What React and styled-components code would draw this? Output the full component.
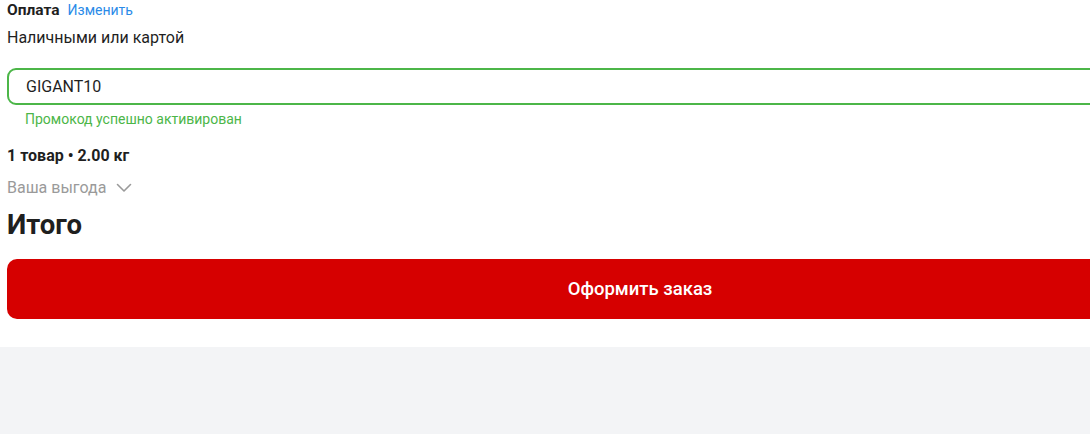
import React from 'react';
import styled, {createGlobalStyle} from "styled-components";

const Global = createGlobalStyle`
    html, body{
        margin: 0;
        padding: 0;
        background-color: #f3f4f6;
        font-family: Roboto, "Noto Sans", sans-serif;
        color: #1f1f1f;
    }
`;

export default function App() {
  return (
    <>
      <Global />
      <Container>
        <div className='payment'>
            <div className='head'>
                <h4>Оплата</h4>
                <span className='change'>Изменить</span>
            </div>
            <p>Наличными или картой</p>
        </div>
        <Promo>
            <input defaultValue="GIGANT10" readOnly />
            <span>Промокод успешно активирован</span>
        </Promo>
        <Summary>
            <div className='count'>1 товар • 2.00 кг</div>
            <div className='benefit'>
                Ваша выгода
                <svg width="16" height="10" viewBox="0 0 16 10" fill="none">
                    <path d="M1.5 1.5 8 8l6.5-6.5" stroke="#9a9a9a" strokeWidth="1.6" strokeLinecap="round" strokeLinejoin="round"/>
                </svg>
            </div>
            <h2>Итого</h2>
        </Summary>
        <OrderButton>Оформить заказ</OrderButton>
      </Container>
    </>
  )
}

const Container = styled.div`
    width: 1266px;
    padding: 0 7px 28px;
    background-color: #ffffff;
    .payment{
        padding-top: 1px;
        .head{
            display: flex;
            align-items: baseline;
            gap: 8px;
            h4{
                margin: 0;
                font-size: 15.5px;
                font-weight: 700;
                line-height: 18px;
            }
            .change{
                color: #2a8be8;
                font-size: 14px;
                line-height: 17px;
            }
        }
        p{
            margin: 9px 0 0;
            font-size: 16px;
            line-height: 19px;
        }
    }
`;

const Promo = styled.div`
    display: flex;
    flex-direction: column;
    margin-top: 21px;
    input{
        box-sizing: border-box;
        width: 100%;
        height: 37px;
        border: 2px solid #4cb648;
        border-radius: 9px;
        padding: 0 17px;
        font-family: Roboto, "Noto Sans", sans-serif;
        font-size: 16px;
        color: #1f1f1f;
        outline: none;
    }
    span{
        margin-top: 6px;
        padding-left: 18px;
        font-size: 14px;
        line-height: 17px;
        color: #4cb648;
    }
`;

const Summary = styled.div`
    display: flex;
    flex-direction: column;
    margin-top: 18px;
    .count{
        font-size: 16px;
        font-weight: 700;
        line-height: 19px;
    }
    .benefit{
        display: flex;
        align-items: center;
        gap: 10px;
        margin-top: 13px;
        font-size: 16px;
        line-height: 19px;
        color: #9a9a9a;
    }
    h2{
        margin: 12px 0 0;
        font-size: 27.5px;
        font-weight: 700;
        line-height: 31px;
    }
`;

const OrderButton = styled.button`
    display: block;
    width: 100%;
    height: 60px;
    margin-top: 19px;
    border: none;
    border-radius: 10px;
    background-color: #d60000;
    color: #ffffff;
    font-family: Roboto, "Noto Sans", sans-serif;
    font-size: 18.5px;
    font-weight: 500;
`;
